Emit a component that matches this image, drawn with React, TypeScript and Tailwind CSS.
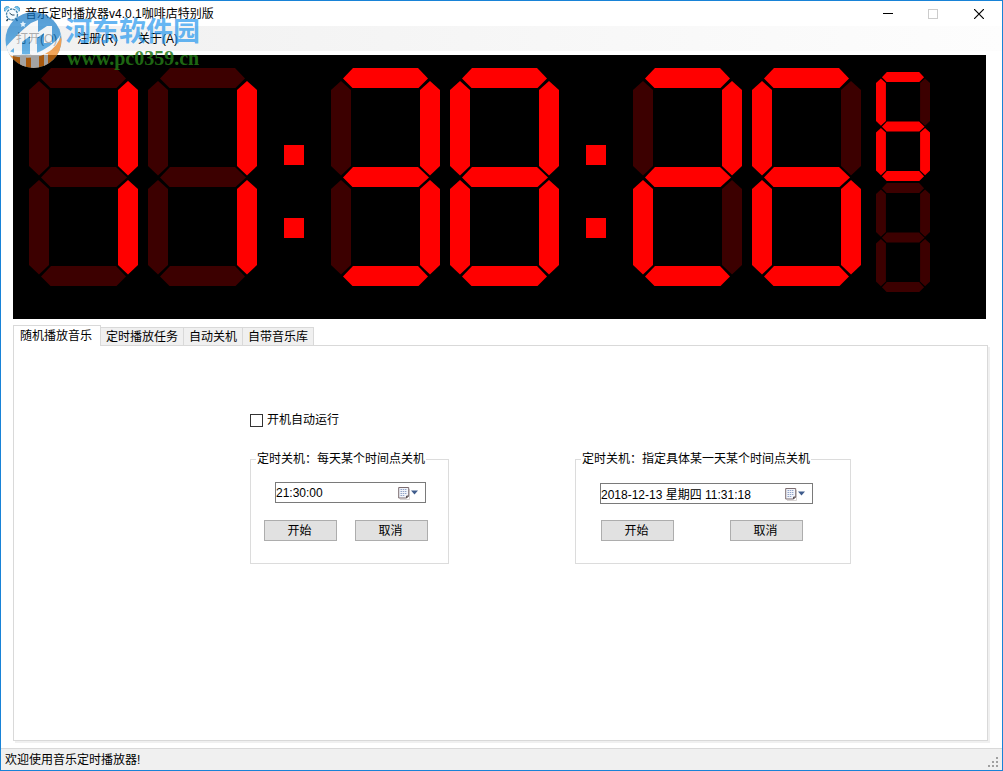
import React, { useState } from "react";

const SEGMENTS: Record<string, string> = {
  a: "12,10.500 22,0 87,0 97,10.500 87.500,20 21.500,20",
  b: "99,13 109,22 109,98 99,107.500 89,98 89,22",
  c: "99,112 109,121 109,197 99,206.500 89,197 89,121",
  d: "12,208.500 22,198 87,198 97,208.500 87.500,218 21.500,218",
  e: "10,112 20,121 20,197 10,206.500 0,197 0,121",
  f: "10,13 20,22 20,98 10,107.500 0,98 0,22",
  g: "12,109.500 22,99 87,99 98,109.500 87.500,119 21.500,119",
};

const LIT: Record<string, string> = {
  "0": "abcdef",
  "1": "bc",
  "2": "abdeg",
  "3": "abcdg",
  "4": "bcfg",
  "5": "acdfg",
  "6": "acdefg",
  "7": "abc",
  "8": "abcdefg",
  "9": "abcdfg",
  " ": "",
};

function Digit({ value, small = false }: { value: string; small?: boolean }) {
  return (
    <svg
      viewBox="0 0 109 218"
      preserveAspectRatio="none"
      className={small ? "h-[109px] w-[54px] shrink-0" : "h-[218px] w-[109px] shrink-0"}
      aria-hidden="true"
    >
      {Object.entries(SEGMENTS).map(([name, points]) => (
        <polygon key={name} points={points} fill={LIT[value].includes(name) ? "#ff0000" : "#3c0000"} />
      ))}
    </svg>
  );
}

function Pair({ value }: { value: string }) {
  return (
    <div className="flex gap-[10px]">
      <Digit value={value[0]} />
      <Digit value={value[1]} />
    </div>
  );
}

function Colon() {
  return (
    <div className="flex flex-col gap-[53px] pt-[77px]">
      <div className="size-5 bg-[#ff0000]" />
      <div className="size-5 bg-[#ff0000]" />
    </div>
  );
}

function Clock() {
  return (
    <div
      role="timer"
      aria-label="11:38:26"
      className="mr-4 ml-3 flex h-[264px] items-start overflow-hidden bg-black pt-[13px] pl-4"
    >
      <div className="flex gap-[27px]">
        <Pair value="11" />
        <Colon />
        <Pair value="38" />
        <Colon />
        <Pair value="26" />
      </div>
      <div className="ml-[15px] flex flex-col gap-[2px] pt-1">
        <Digit value="6" small />
        <Digit value=" " small />
      </div>
    </div>
  );
}

function AlarmIcon() {
  return (
    <svg viewBox="0 0 16 16" className="size-4" aria-hidden="true">
      <path d="M1 5.500a3 3 0 0 1 4.500-4M15 5.500a3 3 0 0 0-4.500-4" fill="#7ec4ea" stroke="#4a9fd0" />
      <path d="M4 13l-1.500 2M12 13l1.500 2" stroke="#26465c" strokeWidth="1.400" />
      <circle cx="8" cy="8.500" r="5.500" fill="#f4fbff" stroke="#3d7fa8" strokeWidth="1.300" strokeDasharray="2.500 .8" />
      <path d="M5.500 7l2.500 2h2.500" fill="none" stroke="#26465c" />
    </svg>
  );
}

function Watermark() {
  return (
    <div className="pointer-events-none absolute top-[10px] left-[4px] flex">
      <svg viewBox="0 0 58 58" className="size-[58px] opacity-70" aria-hidden="true">
        <defs>
          <clipPath id="disc">
            <circle cx="28.500" cy="29" r="28" />
          </clipPath>
          <linearGradient id="sky" x1="0" y1="0" x2="0" y2="1">
            <stop offset="0" stopColor="#0c6fc0" />
            <stop offset="1" stopColor="#35a3e8" />
          </linearGradient>
        </defs>
        <g clipPath="url(#disc)">
          <rect width="58" height="58" fill="url(#sky)" />
          <path d="M3 42Q20 47 36 41T57 25V58H0z" fill="#ee7f14" />
          <path d="M0 37Q13 22 26 12L33 9V21L42 15H47V32H39V22L32 27V43H25V25L17 31V43H9V37L2 43z" fill="#f4f6f8" />
          <path d="M2 39Q22 48 38 39T56 22Q54 36 40 43T3 44z" fill="#f4f6f8" />
          <path d="M15 45h6v13h-6zM26 45h8v13h-8zM39 43h4v15h-4z" fill="#e8e8e8" />
        </g>
        <path d="M18 10l1 2 2 .3-1.500 1.500.4 2.200-1.900-1-1.900 1 .4-2.200L15 12.300l2-.3z" fill="#d7edfb" />
      </svg>
      <div className="flex flex-col pl-[2px] whitespace-nowrap">
        <span className="pt-[3px] font-['Noto_Sans_CJK_SC',sans-serif] text-[27px] leading-[32px] font-bold text-[#2196ee]/70">
          河东软件园
        </span>
        <span className="pt-[2px] pl-[2px] font-['Liberation_Serif',serif] text-[20px] leading-[20px] font-bold text-[#237a16]/85">
          www.pc0359.cn
        </span>
      </div>
    </div>
  );
}

function TitleBar() {
  return (
    <header className="flex h-[25px] items-center bg-white pl-[3px]">
      <AlarmIcon />
      <h1 className="pl-[5px] text-[12px] leading-4">音乐定时播放器v4.0.1咖啡店特别版</h1>
      <div className="ml-auto flex h-full">
        <button type="button" aria-label="最小化" className="flex w-[45px] items-center justify-center">
          <svg viewBox="0 0 10 10" className="size-[10px]" shapeRendering="crispEdges">
            <path d="M0 4.500h10" stroke="#000" />
          </svg>
        </button>
        <button type="button" aria-label="最大化" disabled className="flex w-[46px] items-center justify-center">
          <svg viewBox="0 0 10 10" className="size-[10px]" shapeRendering="crispEdges">
            <path d="M.5 .5h9v9h-9z" fill="none" stroke="#ccc" />
          </svg>
        </button>
        <button type="button" aria-label="关闭" className="flex w-[46px] items-center justify-center">
          <svg viewBox="0 0 10 10" className="size-[10px]">
            <path d="M0 0l10 10M10 0L0 10" stroke="#000" strokeWidth="1.200" />
          </svg>
        </button>
      </div>
    </header>
  );
}

function MenuBar() {
  return (
    <nav className="mb-1 flex h-[25px] items-center bg-linear-to-r from-[#f0f0f0] to-[#fdfdfd] pl-[15px] text-[12px]">
      {["打开(O)", "注册(R)", "关于(A)"].map((label) => (
        <button key={label} type="button" className="w-[61px] text-left leading-4">
          {label}
        </button>
      ))}
    </nav>
  );
}

function CalendarButton({ label }: { label: string }) {
  return (
    <button type="button" aria-label={label} className="flex h-full w-[27px] shrink-0 items-center">
      <svg viewBox="0 0 24 14" className="h-[14px] w-6" aria-hidden="true">
        <path d="M2 13.500h9.500V3" fill="none" stroke="#d8d4d4" />
        <path d="M.7 1.500h10v8.500l-2 2h-8z" fill="#f2f4fa" stroke="#7c6d70" />
        <path d="M8.500 12v-2h2" fill="#7c6d70" stroke="#5e5457" />
        <path d="M2.500 3.500h6.500M2.500 5.500h6.500M2.500 7.500h6.500M2.500 9.500h4.500" stroke="#93a5c9" strokeDasharray="1.500 .7" />
        <path d="M13 4.500h7l-3.500 4z" fill="#3f5c8c" />
      </svg>
    </button>
  );
}

function TimeField({ label, value }: { label: string; value: string }) {
  const [text, setText] = useState(value);
  return (
    <div className="flex h-[21px] items-center border border-[#7a7a7a] bg-white">
      <input
        aria-label={label}
        value={text}
        onChange={(e) => setText(e.target.value)}
        className="h-full w-full min-w-0 text-[12px] outline-none"
      />
      <CalendarButton label="选择日期" />
    </div>
  );
}

function PushButton({ children }: { children: React.ReactNode }) {
  return (
    <button
      type="button"
      className="flex h-[21px] w-[73px] items-center justify-center border border-[#adadad] bg-[#e1e1e1] pr-[2px] text-[12px] leading-4"
    >
      {children}
    </button>
  );
}

const TABS = ["随机播放音乐", "定时播放任务", "自动关机", "自带音乐库"];

function Tabs() {
  return (
    <div role="tablist" className="flex h-5 items-end text-[12px] leading-4">
      {TABS.map((tab, i) => (
        <button
          key={tab}
          type="button"
          role="tab"
          aria-selected={i === 0}
          className={
            i === 0
              ? "relative -mb-px h-[21px] shrink-0 self-start border border-b-0 border-[#d9d9d9] bg-white pr-2 pl-[6px]"
              : "h-[18px] shrink-0 border border-b-0 border-l-0 border-[#d9d9d9] bg-[#f0f0f0] px-[5px]"
          }
        >
          {tab}
        </button>
      ))}
    </div>
  );
}

function Panel() {
  return (
    <section
      role="tabpanel"
      className="flex-1 border border-[#d9d9d9] bg-white pt-[66px] pl-[236px] text-[12px] shadow-[2px_2px_0_#f0f0f0]"
    >
      <label className="flex w-fit items-center gap-1 leading-4">
        <input type="checkbox" className="size-[13px] appearance-none border border-[#333] bg-white checked:bg-[#333]" />
        开机自动运行
      </label>
      <div className="mt-[23px] flex items-start gap-[126px]">
        <fieldset className="h-[113px] w-[199px] shrink-0 border border-[#dcdcdc] pl-[13px]">
          <legend className="-ml-2 px-px leading-4">定时关机：每天某个时间点关机</legend>
          <div className="mt-[15px] ml-[11px] w-[151px]">
            <TimeField label="每天关机时间" value="21:30:00" />
          </div>
          <div className="mt-[17px] flex gap-[18px]">
            <PushButton>开始</PushButton>
            <PushButton>取消</PushButton>
          </div>
        </fieldset>
        <fieldset className="h-[113px] w-[276px] shrink-0 border border-[#dcdcdc] pl-6">
          <legend className="-ml-[19px] px-px leading-4">定时关机：指定具体某一天某个时间点关机</legend>
          <div className="mt-4 w-[213px]">
            <TimeField label="指定关机时间" value="2018-12-13 星期四 11:31:18" />
          </div>
          <div className="mt-4 ml-px flex gap-14">
            <PushButton>开始</PushButton>
            <PushButton>取消</PushButton>
          </div>
        </fieldset>
      </div>
    </section>
  );
}

function StatusBar() {
  return (
    <footer className="mt-[7px] flex h-[22px] items-center justify-between border-t border-[#d9d9d9] bg-[#f0f0f0] pr-[3px] pb-[2px] pl-1 text-[12px] leading-4">
      <span className="pt-[2px]">欢迎使用音乐定时播放器!</span>
      <svg viewBox="0 0 11 11" className="size-[11px] self-end" aria-hidden="true">
        <path d="M8 0h2v2h-2zM4 4h2v2h-2zM8 4h2v2h-2zM0 8h2v2h-2zM4 8h2v2h-2zM8 8h2v2h-2z" fill="#a0a0a0" />
      </svg>
    </footer>
  );
}

export default function App() {
  return (
    <div className="relative flex min-h-screen flex-col border border-[#1883d7] bg-white font-['Liberation_Sans','Noto_Sans_CJK_SC',sans-serif] text-black">
      <TitleBar />
      <MenuBar />
      <Clock />
      <main className="mt-[6px] mr-[14px] ml-3 flex flex-1 flex-col">
        <Tabs />
        <Panel />
      </main>
      <StatusBar />
      <Watermark />
    </div>
  );
}
